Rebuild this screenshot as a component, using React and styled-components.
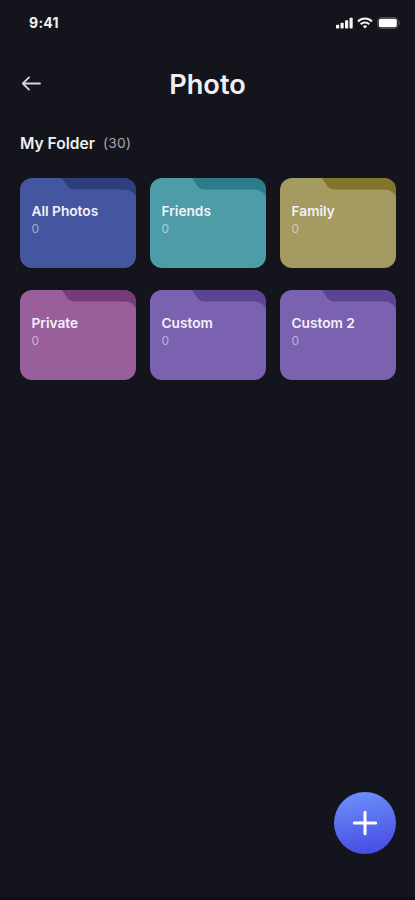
import React from 'react';
import styled, { createGlobalStyle } from 'styled-components';

const GlobalStyle = createGlobalStyle`
  * { box-sizing: border-box; }
  body { margin: 0; background: #14141d; }
`;

const Screen = styled.div`
  width: 415px;
  height: 900px;
  display: flex;
  flex-direction: column;
  background: #14141d;
  color: #f0f0f2;
  font-family: Inter, sans-serif;
  border-bottom: 3px solid #110a16;
  overflow: hidden;
`;

const StatusBar = styled.div`
  height: 44px;
  padding: 1px 14px 0 29px;
  display: flex;
  align-items: center;
  justify-content: space-between;
`;

const Time = styled.span`
  font-size: 14px;
  line-height: 19px;
  font-weight: 700;
  letter-spacing: 0.3px;
`;

const StatusIcons = styled.div`
  display: flex;
  align-items: center;
  gap: 4px;
  svg { display: block; }
`;

const Header = styled.header`
  height: 80px;
  padding: 0 20px;
  display: grid;
  grid-template-columns: 24px 1fr 24px;
  align-items: center;
`;

const BackButton = styled.button`
  width: 24px;
  height: 24px;
  padding: 0;
  border: 0;
  background: none;
  svg { display: block; }
`;

const Title = styled.h1`
  margin: 1px 0 0;
  text-align: center;
  font-size: 27.2px;
  line-height: 32px;
  font-weight: 600;
`;

const Section = styled.main`
  flex: 1;
  padding: 9px 19px 0 20px;
`;

const SectionHeading = styled.div`
  display: flex;
  align-items: center;
  gap: 8px;
  height: 22px;
`;

const SectionTitle = styled.h2`
  margin: 0;
  font-size: 15.6px;
  line-height: 20px;
  font-weight: 600;
`;

const SectionCount = styled.span`
  font-size: 13.7px;
  line-height: 18px;
  margin-top: -2px;
  color: #a9a9b2;
  letter-spacing: 0.3px;
`;

const FolderGrid = styled.div`
  margin-top: 23px;
  display: grid;
  grid-template-columns: repeat(3, 116px);
  grid-auto-rows: 89.5px;
  justify-content: space-between;
  row-gap: 22.5px;
`;

const Folder = styled.article`
  position: relative;
  padding: 25px 12px 0 11.5px;
  border-radius: 12px;
  overflow: hidden;
  background: ${(p) => p.$color};
`;

const FolderFlap = styled.svg`
  position: absolute;
  top: 0;
  right: 0;
  display: block;
  fill: ${(p) => p.$color};
`;

const FolderName = styled.h3`
  margin: 0;
  font-size: 13.7px;
  line-height: 17px;
  font-weight: 600;
  white-space: nowrap;
  color: #f3f1f9;
`;

const FolderCount = styled.div`
  margin-top: 1px;
  font-size: 12px;
  line-height: 16px;
  color: rgba(255, 255, 255, 0.5);
`;

const Footer = styled.footer`
  display: flex;
  justify-content: flex-end;
  padding: 0 19px 43px 0;
`;

const AddButton = styled.button`
  width: 62px;
  height: 62px;
  padding: 0;
  border: 0;
  border-radius: 50%;
  display: grid;
  place-items: center;
  background: linear-gradient(170deg, #6f93fb 0%, #4347e2 100%);
`;

const folders = [
  { name: 'All Photos', color: '#4556a0', flap: '#2e3d7c' },
  { name: 'Friends', color: '#4d9ca7', flap: '#2b7d89' },
  { name: 'Family', color: '#a49b60', flap: '#80752a' },
  { name: 'Private', color: '#995f9b', flap: '#773b7b' },
  { name: 'Custom', color: '#7b62b0', flap: '#5b4493' },
  { name: 'Custom 2', color: '#7b62b0', flap: '#5b4493' },
];

export default function App() {
  return (
    <>
      <GlobalStyle />
      <Screen>
        <StatusBar>
          <Time>9:41</Time>
          <StatusIcons>
            <svg width="18" height="12" viewBox="0 0 18 12" fill="#f4f4f4">
              <rect x="1" y="7.7" width="3.2" height="3.8" rx="0.8" />
              <rect x="5.5" y="5.7" width="3.2" height="5.8" rx="0.8" />
              <rect x="10" y="3.2" width="3.2" height="8.3" rx="0.8" />
              <rect x="14.5" y="0.8" width="3.2" height="10.7" rx="0.8" />
            </svg>
            <svg width="16" height="12" viewBox="0 0 16 12" fill="none" stroke="#f4f4f4" strokeWidth="2.1">
              <path d="M1 4.4a10 10 0 0 1 14 0" />
              <path d="M3.7 7.2a6.1 6.1 0 0 1 8.6 0" />
              <path d="M5.8 9.2a3.2 3.2 0 0 1 4.4 0L8 11.6z" fill="#f4f4f4" stroke="none" />
            </svg>
            <svg width="24" height="12" viewBox="0 0 24 12">
              <rect x="0.5" y="0.5" width="20.5" height="11" rx="3.2" fill="none" stroke="#4b4b53" />
              <rect x="1.8" y="1.8" width="18" height="8.4" rx="1.8" fill="#fff" />
              <path d="M22.2 4v4c1.3-.6 1.3-3.4 0-4z" fill="#55555d" />
            </svg>
          </StatusIcons>
        </StatusBar>
        <Header>
          <BackButton aria-label="Back">
            <svg width="24" height="24" viewBox="0 0 24 24" fill="none" stroke="#d5d5d9" strokeWidth="1.8" strokeLinecap="round" strokeLinejoin="round">
              <path d="M20 11.5H2.8M9 5.4L2.8 11.5L9 17.6" />
            </svg>
          </BackButton>
          <Title>Photo</Title>
        </Header>
        <Section>
          <SectionHeading>
            <SectionTitle>My Folder</SectionTitle>
            <SectionCount>(30)</SectionCount>
          </SectionHeading>
          <FolderGrid>
            {folders.map((f) => (
              <Folder key={f.name} $color={f.color}>
                <FolderFlap $color={f.flap} width="76" height="22" viewBox="0 0 76 22">
                  <path d="M1.5 0C5 2 6.5 11.5 14 11.5H64Q73 11.5 76 19V0Z" />
                </FolderFlap>
                <FolderName>{f.name}</FolderName>
                <FolderCount>0</FolderCount>
              </Folder>
            ))}
          </FolderGrid>
        </Section>
        <Footer>
          <AddButton aria-label="Add folder">
            <svg width="26" height="26" viewBox="0 0 26 26" stroke="#fff" strokeWidth="3" strokeLinecap="round">
              <path d="M13 2.3V23.7M2.3 13H23.7" />
            </svg>
          </AddButton>
        </Footer>
      </Screen>
    </>
  );
}
